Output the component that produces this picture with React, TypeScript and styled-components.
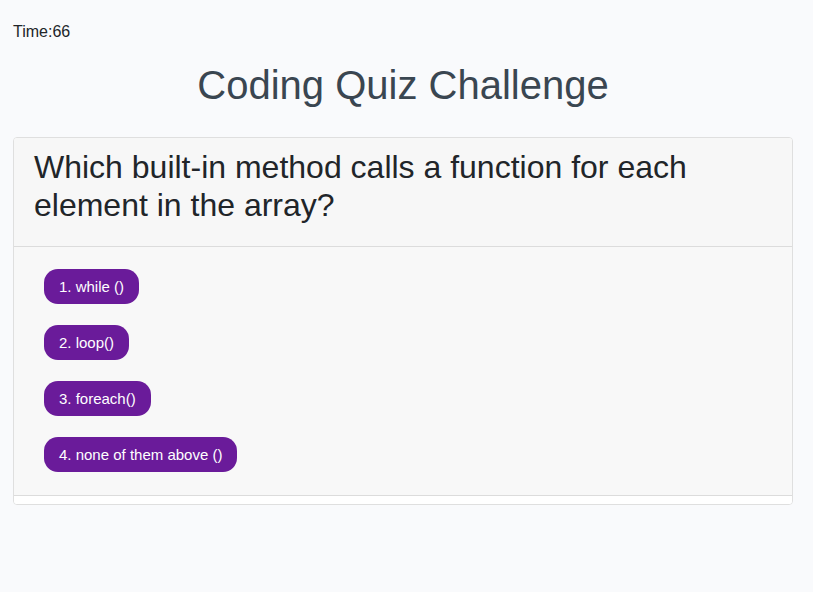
import React from "react";
import styled, { createGlobalStyle } from "styled-components";

const Global = createGlobalStyle`
  html, body { margin: 0; padding: 0; background: #f9fafc; }
  body { font-family: "Liberation Sans", Arial, sans-serif; color: #212529; }
  * { box-sizing: border-box; }
`;

const Page = styled.div`
  padding: 22px 20px 0 13px;
`;

const Timer = styled.div`
  font-size: 16px;
  line-height: 20px;
  color: #212529;
`;

const Title = styled.h1`
  margin: 19px 0 28px;
  text-align: center;
  font-size: 40px;
  line-height: 48px;
  font-weight: 400;
  color: #3a4651;
`;

const Card = styled.div`
  border: 1px solid #dfdfdf;
  border-radius: 4px;
  background: #fff;
  overflow: hidden;
`;

const Header = styled.div`
  background: #f7f7f7;
  border-bottom: 1px solid #dcdcdc;
  padding: 10px 20px 21px;
`;

const Question = styled.h2`
  margin: 0;
  font-size: 32px;
  line-height: 38.4px;
  font-weight: 400;
  color: #212529;
`;

const Body = styled.div`
  background: #f8f8f8;
  padding: 22px 30px 23px;
  display: flex;
  flex-direction: column;
  align-items: flex-start;
  gap: 21px;
`;

const Choice = styled.button`
  height: 35px;
  padding: 0 15px;
  border: none;
  border-radius: 14px;
  background: #6a1b9a;
  color: #fff;
  font-family: "Liberation Sans", Arial, sans-serif;
  font-size: 15px;
  cursor: pointer;
`;

const Footer = styled.div`
  height: 9px;
  background: #fff;
  border-top: 1px solid #dcdcdc;
`;

const choices = ["1. while ()", "2. loop()", "3. foreach()", "4. none of them above ()"];

export default function App() {
  return (
    <>
      <Global />
      <Page>
        <Timer>Time:66</Timer>
        <Title>Coding Quiz Challenge</Title>
        <Card>
          <Header>
            <Question>Which built-in method calls a function for each element in the array?</Question>
          </Header>
          <Body>
            {choices.map((c) => (
              <Choice key={c}>{c}</Choice>
            ))}
          </Body>
          <Footer />
        </Card>
      </Page>
    </>
  );
}
